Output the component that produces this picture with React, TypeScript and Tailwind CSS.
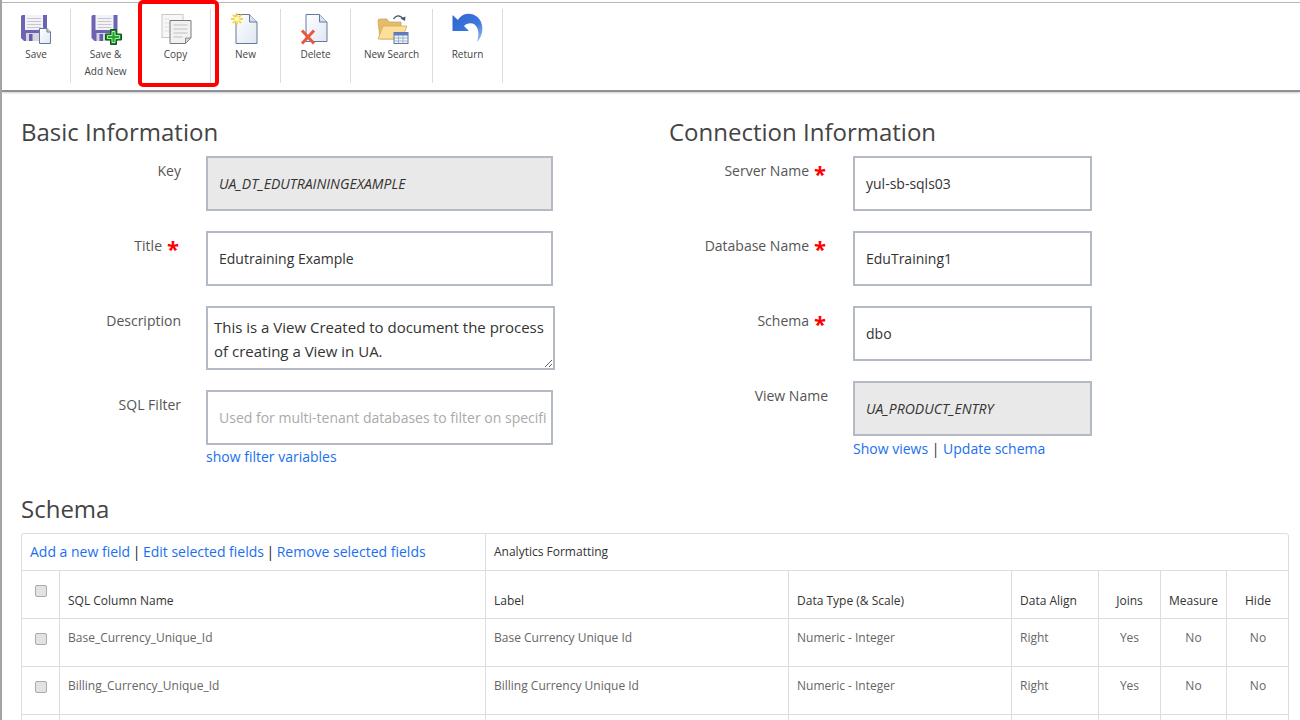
import React from "react";

const FONT = "font-['Open_Sans',sans-serif]";

function PageSvg({ x = 0, y = 0, w = 22, h = 30, fold = 8 }: { x?: number; y?: number; w?: number; h?: number; fold?: number }) {
  return (
    <g transform={`translate(${x} ${y})`}>
      <path d={`M0.5 0.5H${w - fold}L${w - 0.5} ${fold}V${h - 0.5}H0.5z`} fill="url(#pageFill)" stroke="#66799a" strokeWidth="1" />
      <path d={`M${w - fold} 0.5V${fold}H${w - 0.5}`} fill="#d5dfee" stroke="#66799a" strokeWidth="1" />
    </g>
  );
}

function Disk({ x }: { x: number }) {
  return (
    <g transform={`translate(${x} 3)`}>
      <path d="M0 1.500Q0 0 1.500 0H26V26H3L0 23z" fill="#6c63b3" />
      <rect x="4" y="0" width="18" height="15" fill="#f3f3f7" />
      <path d="M6 3.500h14M6 6.500h14M6 9.500h14M6 12.500h14" stroke="#c6c6d3" />
      <rect x="5" y="18" width="16" height="8" fill="#d6d6e2" />
      <rect x="8" y="19" width="3.500" height="7" fill="#655cab" />
    </g>
  );
}

function SaveTool() {
  return (
    <svg width="34" height="34" viewBox="0 0 34 34">
      <Disk x={2} />
      <PageSvg x={20} y={16} w={12} h={16} fold={4} />
    </svg>
  );
}

function SaveAddTool() {
  return (
    <svg width="34" height="34" viewBox="0 0 34 34">
      <Disk x={2.5} />
      <path d="M21.500 17.500h6v4.500h5v6h-5v4.500h-6V28h-5v-6h5z" fill="#0f8a1a" stroke="#0d5c14" strokeWidth="1" />
      <path d="M23 19.500h3v4h4.500v3H26v4h-3v-4h-4.500v-3H23z" fill="#1ea82a" stroke="#dff3df" strokeWidth="0.8" />
    </svg>
  );
}

function CopyTool() {
  return (
    <svg width="34" height="34" viewBox="0 0 34 34">
      <rect x="3" y="2.500" width="21" height="23" fill="#f7f7f7" stroke="#c8c8c8" />
      <path d="M5.500 7h5M5.500 11h5M5.500 15h5M5.500 19h5" stroke="#dedede" />
      <path d="M11 8.500h21V26l-5.500 5.500H11z" fill="#f1f1f1" stroke="#7a7a7a" />
      <path d="M14.500 13h14M14.500 17h14M14.500 21h14M14.500 25h9" stroke="#bfbfbf" />
      <path d="M26.500 31.500V26H32z" fill="#d4d4d4" stroke="#8a8a8a" />
    </svg>
  );
}

function NewTool() {
  return (
    <svg width="34" height="34" viewBox="0 0 34 34">
      <PageSvg x={6.500} y={2} w={22} h={30} />
      <path d="M8 1v12M2 7h12M3.800 2.800l8.400 8.400M12.200 2.800l-8.400 8.400" stroke="#f5d63f" strokeWidth="1.800" />
      <circle cx="8" cy="7" r="2.600" fill="#fff6bd" />
    </svg>
  );
}

function DeleteTool() {
  return (
    <svg width="34" height="34" viewBox="0 0 34 34">
      <PageSvg x={6.500} y={2} w={22} h={28} />
      <path d="M3 18.500l12 13M15 18.500l-12 13" stroke="#e9573f" strokeWidth="3" />
    </svg>
  );
}

function SearchTool() {
  return (
    <svg width="34" height="34" viewBox="0 0 34 34">
      <path d="M3 9q0-2 2-2h7l2 3h12v17H5z" fill="#e5bd6a" stroke="#c79d4c" strokeWidth="0.7" />
      <path d="M8 14h24l-5 13H3z" fill="#fbdf9a" stroke="#cfa552" strokeWidth="0.7" />
      <path d="M18.500 7c2.500-4 7-4.500 9.500 0" fill="none" stroke="#42566e" strokeWidth="1.300" />
      <path d="M25.500 6.500l4.500 2.500 .5-4.500z" fill="#42566e" />
      <rect x="19" y="20.500" width="14" height="11" fill="#f2f5fa" stroke="#6577a0" />
      <rect x="19" y="20.500" width="14" height="3" fill="#5f7dc2" />
      <path d="M19 26h14M19 29h14M23.500 23.500v8M28 23.500v8" stroke="#8b9bb9" strokeWidth="0.7" />
    </svg>
  );
}

function ReturnTool() {
  return (
    <svg width="34" height="34" viewBox="0 0 34 34">
      <defs>
        <linearGradient id="returnFill" x1="0" y1="0" x2="1" y2="1">
          <stop offset="0" stopColor="#2f63d0" />
          <stop offset="0.6" stopColor="#3d78dc" />
          <stop offset="1" stopColor="#a9c6ee" />
        </linearGradient>
      </defs>
      <path d="M1.500 3V19H18L13 14C16 11 22 10 25 14C28 18 28 24 26 30C31 25 33 17 30 10C27 3 19 0 12 3C10 4 8 6 7 8z" fill="url(#returnFill)" />
    </svg>
  );
}

const tools = [
  { label: ["Save"], icon: <SaveTool />, w: "w-[69px]" },
  { label: ["Save &", "Add New"], icon: <SaveAddTool />, w: "w-[70px]" },
  { label: ["Copy"], icon: <CopyTool />, w: "w-[70px]" },
  { label: ["New"], icon: <NewTool />, w: "w-[70px]" },
  { label: ["Delete"], icon: <DeleteTool />, w: "w-[70px]" },
  { label: ["New Search"], icon: <SearchTool />, w: "w-[82px]" },
  { label: ["Return"], icon: <ReturnTool />, w: "w-[70px]" },
];

function Toolbar() {
  return (
    <div className="relative h-[90px] border-t border-b-2 border-t-[#b8b8b8] border-b-[#8f8f96] mt-[2px] flex pt-[6px] shadow-[0_1px_2px_rgba(0,0,0,0.2)]">
      <svg width="0" height="0" className="absolute">
        <defs>
          <linearGradient id="pageFill" x1="0" y1="0" x2="1" y2="1">
            <stop offset="0" stopColor="#ffffff" />
            <stop offset="1" stopColor="#dfe6f3" />
          </linearGradient>
        </defs>
      </svg>
      {tools.map((t) => (
        <div key={t.label[0]} className={`${t.w} h-[74px] border-r border-[#dcdcdc] flex flex-col items-center`}>
          <div className="h-[37px] pt-[3px]">{t.icon}</div>
          <div className="text-[10px] leading-[17px] text-[#444] text-center">
            {t.label.map((l) => (
              <div key={l}>{l}</div>
            ))}
          </div>
        </div>
      ))}
      <div className="absolute left-[136px] top-[-3px] w-[81px] h-[87px] border-4 border-[#ff0000] rounded-[5px]" />
    </div>
  );
}

function Field({
  label,
  value,
  required,
  readOnly,
  placeholder,
  inputW,
}: {
  label: string;
  value?: string;
  required?: boolean;
  readOnly?: boolean;
  placeholder?: string;
  inputW: string;
}) {
  return (
    <div className="flex">
      <div className="w-[179px] flex justify-end pt-[5px] text-sm leading-5 text-[#555]">
        <span>{label}</span>
        {required && <span className="ml-[5px] mr-[2px] font-bold text-[22px] leading-6 text-[#ff0000]">*</span>}
      </div>
      <div
        className={`${inputW} ml-[25px] h-[55px] border-2 border-[#b4bac3] flex items-center pl-[11px] text-sm overflow-hidden whitespace-nowrap ${
          readOnly ? "bg-[#e9e9e9] italic text-[#333]" : placeholder ? "text-[#aaa]" : "text-[#333]"
        }`}
      >
        {value ?? placeholder}
      </div>
    </div>
  );
}

const cols = "grid grid-cols-[38px_426px_303px_223px_87px_62px_66px_62px]";

const rows = [
  ["Base_Currency_Unique_Id", "Base Currency Unique Id", "Numeric - Integer", "Right", "Yes", "No", "No"],
  ["Billing_Currency_Unique_Id", "Billing Currency Unique Id", "Numeric - Integer", "Right", "Yes", "No", "No"],
  ["", "", "", "", "", "", ""],
];

function Check() {
  return <span className="block w-[12px] h-[12px] rounded-[2px] border border-[#aaa] bg-[#e3e3e3]" />;
}

function SchemaTable() {
  return (
    <div className="mx-[21px] mt-[8px] w-[1268px] border border-[#ddd] rounded-t-[3px]">
      <div className="flex h-[37px] items-center border-b border-[#ddd]">
        <div className="w-[464px] h-full border-r border-[#ddd] flex items-center pl-[8px] text-sm text-[#222]">
          <a className="text-[#1a6ff0]">Add a new field</a>
          <span className="mx-[2.5px]">|</span>
          <a className="text-[#1a6ff0]">Edit selected fields</a>
          <span className="mx-[2.5px]">|</span>
          <a className="text-[#1a6ff0]">Remove selected fields</a>
        </div>
        <div className="pl-[8px] text-xs text-[#333]">Analytics Formatting</div>
      </div>
      <div className={`${cols} h-[48px] border-b border-[#ddd] text-xs text-[#333]`}>
        <div className="border-r border-[#ddd] flex justify-center pt-[14px]">
          <Check />
        </div>
        <div className="border-r border-[#ddd] pl-[8px] pt-[22px]">SQL Column Name</div>
        <div className="border-r border-[#ddd] pl-[8px] pt-[22px]">Label</div>
        <div className="border-r border-[#ddd] pl-[8px] pt-[22px]">Data Type (&amp; Scale)</div>
        <div className="border-r border-[#ddd] pl-[8px] pt-[22px]">Data Align</div>
        <div className="border-r border-[#ddd] text-center pt-[22px]">Joins</div>
        <div className="border-r border-[#ddd] text-center pt-[22px]">Measure</div>
        <div className="text-center pt-[22px]">Hide</div>
      </div>
      {rows.map((r, i) => (
        <div key={i} className={`${cols} h-[48px] border-b border-[#ddd] text-xs text-[#666]`}>
          <div className="border-r border-[#ddd] flex justify-center pt-[14px]">{r[0] && <Check />}</div>
          <div className="border-r border-[#ddd] pl-[8px] pt-[11px]">{r[0]}</div>
          <div className="border-r border-[#ddd] pl-[8px] pt-[11px]">{r[1]}</div>
          <div className="border-r border-[#ddd] pl-[8px] pt-[11px]">{r[2]}</div>
          <div className="border-r border-[#ddd] pl-[8px] pt-[11px]">{r[3]}</div>
          <div className="border-r border-[#ddd] text-center pt-[11px]">{r[4]}</div>
          <div className="border-r border-[#ddd] text-center pt-[11px]">{r[5]}</div>
          <div className="text-center pt-[11px]">{r[6]}</div>
        </div>
      ))}
    </div>
  );
}

export default function App() {
  return (
    <div className={`${FONT} h-[720px] w-[1300px] overflow-hidden bg-white border-l-2 border-[#a3a3a3]`}>
      <Toolbar />
      <div className="flex mt-[24px]">
        {/* left column */}
        <div className="w-[647px] pl-[19px]">
          <h2 className="text-2xl leading-8 text-[#444]">Basic Information</h2>
          <div className="-ml-[19px] mt-[8px] flex flex-col gap-[20px]">
            <Field label="Key" value="UA_DT_EDUTRAININGEXAMPLE" readOnly inputW="w-[347px]" />
            <Field label="Title" value="Edutraining Example" required inputW="w-[347px]" />
            <div className="flex">
              <div className="w-[179px] pt-[5px] text-right text-sm leading-5 text-[#555]">Description</div>
              <div className="relative ml-[25px] w-[349px] h-[64px] border-2 border-[#b4bac3] pl-[6px] pt-[7px] text-[15px] leading-6 text-[#333]">
                This is a View Created to document the process
                <br />
                of creating a View in UA.
                <svg className="absolute right-0 bottom-0" width="9" height="9" viewBox="0 0 9 9">
                  <path d="M1 8l7-7M5 8l3-3" stroke="#666" strokeWidth="1" />
                </svg>
              </div>
            </div>
            <div>
              <Field label="SQL Filter" placeholder="Used for multi-tenant databases to filter on specifi" inputW="w-[347px]" />
              <a className="block ml-[204px] mt-[2px] text-sm leading-5 text-[#1a6ff0]">show filter variables</a>
            </div>
          </div>
        </div>
        {/* right column */}
        <div className="flex-1">
          <h2 className="text-2xl leading-8 text-[#444] pl-[20px]">Connection Information</h2>
          <div className="mt-[8px] flex flex-col gap-[20px]">
            <Field label="Server Name" value="yul-sb-sqls03" required inputW="w-[239px]" />
            <Field label="Database Name" value="EduTraining1" required inputW="w-[239px]" />
            <Field label="Schema" value="dbo" required inputW="w-[239px]" />
            <div>
              <Field label="View Name" value="UA_PRODUCT_ENTRY" readOnly inputW="w-[239px]" />
              <div className="ml-[204px] mt-[3px] text-sm leading-5 text-[#333]">
                <a className="text-[#1a6ff0]">Show views</a> | <a className="text-[#1a6ff0]">Update schema</a>
              </div>
            </div>
          </div>
        </div>
      </div>
      <h2 className="text-2xl leading-8 text-[#444] pl-[19px] mt-[26px]">Schema</h2>
      <div className="-ml-[2px]">
        <SchemaTable />
      </div>
    </div>
  );
}
